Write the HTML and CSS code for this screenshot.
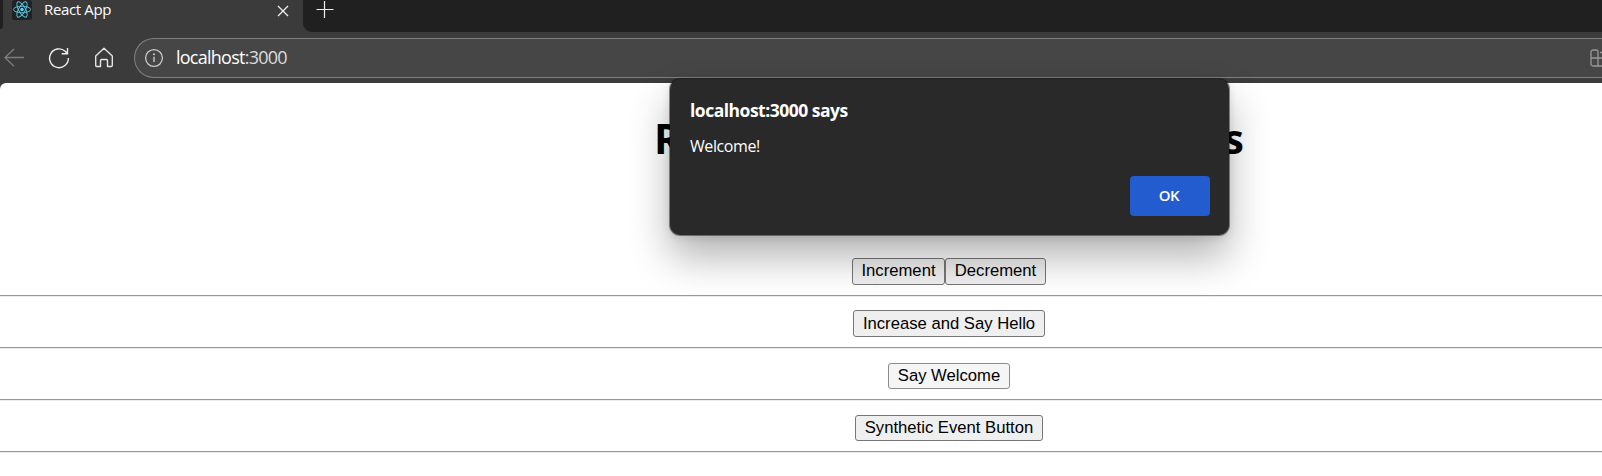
FILE: index.html
```html
<!DOCTYPE html>
<html lang="en">
<head>
<meta charset="utf-8">
<title>React App</title>
<link rel="stylesheet" href="styles.css">
</head>
<body>
<header class="browser">
  <div class="tabs">
    <div class="prev-tab"></div>
    <div class="tab">
      <svg class="favicon" width="20" height="20" viewBox="0 0 20 20"><rect width="20" height="20" rx="2.5" fill="#222"/><g fill="none" stroke="#58bfd8" stroke-width="1"><ellipse cx="10" cy="9.5" rx="8.6" ry="3.3"/><ellipse cx="10" cy="9.5" rx="8.6" ry="3.3" transform="rotate(60 10 9.5)"/><ellipse cx="10" cy="9.5" rx="8.6" ry="3.3" transform="rotate(120 10 9.5)"/></g><circle cx="10" cy="9.5" r="1.7" fill="#61dafb"/></svg>
      <span class="tab-title">React App</span>
      <svg class="close" width="12" height="12" viewBox="0 0 12 12"><path d="M1 1l10 10M11 1L1 11" stroke="#eee" stroke-width="1.3"/></svg>
    </div>
    <div class="tab-rest">
      <svg width="18" height="18" viewBox="0 0 18 18"><path d="M.5 9.500h17M8.500 1v17" stroke="#eee" stroke-width="1.2"/></svg>
    </div>
  </div>
  <div class="toolbar">
    <svg class="back" width="21" height="20" viewBox="0 0 21 20"><path d="M20 9.500H1M10 1L1 9.500l9 8.800" fill="none" stroke="#7d7d7d" stroke-width="1.3"/></svg>
    <svg class="reload" width="22" height="22" viewBox="0 0 22 22"><path d="M20.400 11a9.400 9.400 0 1 1-3.200-6.800l2.200 2.300M19.500 1v5.700h-5.800" fill="none" stroke="#f0f0f0" stroke-width="1.4"/></svg>
    <svg class="home" width="20" height="22" viewBox="0 0 20 22"><path d="M1.700 9L10 1.300 18.300 9v9.300a1.200 1.200 0 0 1-1.200 1.200h-3.600v-6a1 1 0 0 0-1-1h-5a1 1 0 0 0-1 1v6H2.900a1.200 1.200 0 0 1-1.200-1.200z" fill="none" stroke="#e6e6e6" stroke-width="1.400" stroke-linejoin="round"/></svg>
    <div class="address">
      <svg width="20" height="20" viewBox="0 0 20 20"><circle cx="10" cy="10" r="8.400" fill="none" stroke="#ccc" stroke-width="1.300"/><path d="M10 8.700v5.300" stroke="#ccc" stroke-width="1.400"/><circle cx="10" cy="6.300" r="1" fill="#ccc"/></svg>
      <span class="url">localhost<span class="port">:3000</span></span>
      <svg class="apps" width="12" height="20" viewBox="0 0 12 20"><path d="M12 18H3a2 2 0 0 1-2-2V4a2 2 0 0 1 2-2h3a2 2 0 0 1 2 2v14M1 10h11M10 4.500h2" fill="none" stroke="#999" stroke-width="1.300"/></svg>
    </div>
  </div>
</header>
<main class="page">
  <h1 class="heading"><span>R</span><span>s</span></h1>
  <section class="row counter"><button class="b-inc">Increment</button><button class="b-dec">Decrement</button></section>
  <section class="row"><button class="b-hello">Increase and Say Hello</button></section>
  <section class="row"><button class="b-welcome">Say Welcome</button></section>
  <section class="row"><button class="b-event">Synthetic Event Button</button></section>
</main>
<div class="dialog" role="alertdialog">
  <div class="dialog-title"><span>localhost:3000 says</span></div>
  <div class="dialog-message"><span>Welcome!</span></div>
  <button class="ok">OK</button>
</div>
</body>
</html>
```
FILE: styles.css
```css
* { box-sizing: border-box; }
body { margin: 0; height: 476px; overflow: hidden; background: #3b3b3b; font-family: "Open Sans", "Noto Sans", sans-serif; }
svg { display: block; flex: none; }
.browser { height: 83px; background: #3b3b3b; color: #fff; }
.tabs { display: flex; height: 32px; }
.prev-tab { width: 3px; height: 29px; background: #202020; border-bottom-right-radius: 3px; }
.tab { width: 300px; display: flex; align-items: flex-start; padding-left: 9px; }
.tab-title { margin-left: 12px; width: 221px; line-height: 18px; font-size: 15px; letter-spacing: -0.35px; white-space: nowrap; }
.close { margin: 5px 0 0 12px; }
.tab-rest { flex: 1; background: #202020; border-bottom-left-radius: 9px; padding-left: 13px; }
.toolbar { display: flex; height: 51px; padding-top: 6px; }
.back { margin: 10px 0 0 4px; }
.reload { margin: 9px 0 0 23px; }
.home { margin: 9px 0 0 24px; }
.address { flex: 1; margin-left: 20px; height: 40px; border: 1px solid #808080; border-right: 0; border-radius: 20px 0 0 20px; background: #464646; display: flex; align-items: center; padding-left: 9px; }
.url { margin-left: 12px; height: 38px; font-size: 18px; line-height: 36px; letter-spacing: -0.75px; }
.port { color: #dcdcdc; }
.apps { margin-left: auto; }
.page { height: 393px; background: #fff; border-top-left-radius: 6px; }
.heading { margin: 0; padding: 28px 358px 0 654px; height: 165px; display: flex; justify-content: space-between; color: #000; font-size: 41px; line-height: 54px; font-weight: 700; }
.row { height: 52px; border-bottom: 1px solid #999; box-shadow: 0 1px #ececec; display: flex; justify-content: center; align-items: flex-start; padding: 14px 0 0 296px; }
.row.counter { height: 48px; padding-top: 10px; }
.row button { height: 27px; padding: 0; border: 1px solid #767676; border-radius: 3px; background: #efefef; color: #000; font: 16.67px/22px "Liberation Sans", Arial, sans-serif; white-space: nowrap; }
.row .b-inc, .row .b-dec { padding-bottom: 2px; }
.row .b-inc { width: 93px; }
.row .b-dec { width: 101px; }
.row .b-hello { width: 192px; }
.row .b-welcome { width: 122px; height: 26px; margin-top: 1px; background: #f5f5f5; border-color: #8c8c8c; }
.row .b-event { width: 188px; height: 26px; margin-top: 1px; }
.dialog { position: absolute; left: 670px; top: 79px; width: 559px; height: 156px; padding: 19px 19px 19px 20px; display: flex; flex-direction: column; background: #292929; color: #fff; border-radius: 10px; box-shadow: 0 0 0 1px rgba(0,0,0,.42), 0 22px 40px rgba(0,0,0,.3), 0 2px 10px rgba(0,0,0,.12); }
.dialog-title { font-size: 17.500px; line-height: 24px; font-weight: 700; letter-spacing: -0.5px; }
.dialog-message { margin-top: 13px; font-size: 16px; line-height: 22px; letter-spacing: -0.4px; }
.ok { margin-top: auto; align-self: flex-end; width: 80px; height: 40px; padding: 0 2px 2px 0; border: 0; border-radius: 4px; background: #235ccf; color: #fff; font: 600 15px/20px "Open Sans", sans-serif; letter-spacing: -0.5px; }
```
